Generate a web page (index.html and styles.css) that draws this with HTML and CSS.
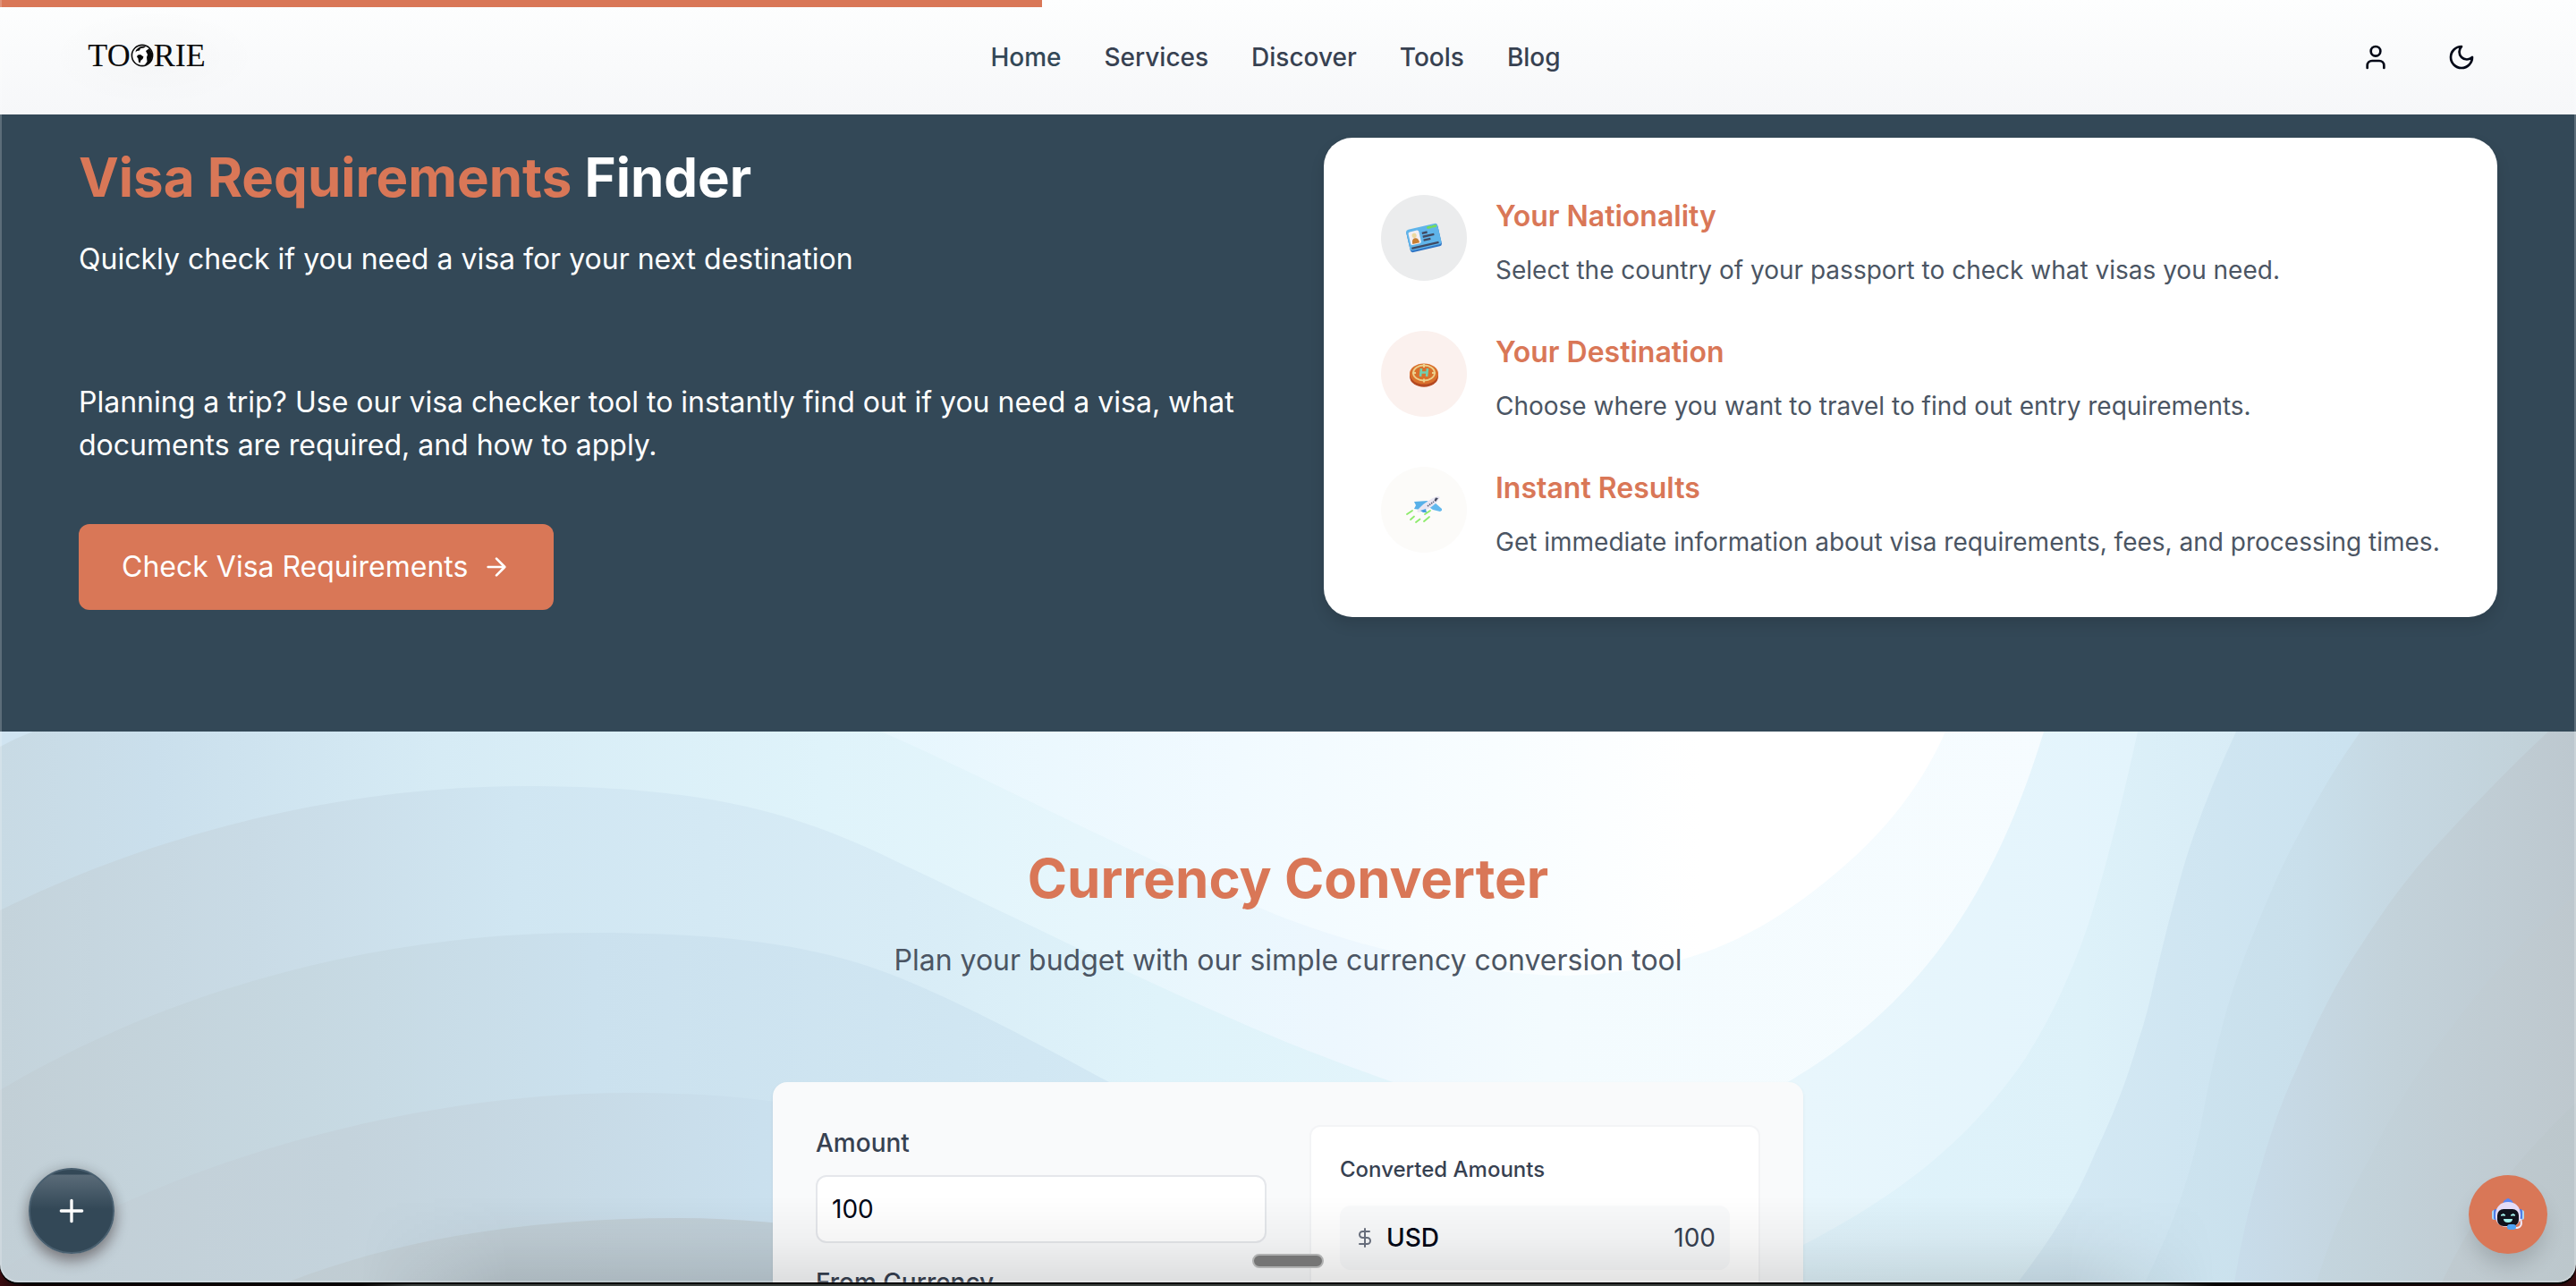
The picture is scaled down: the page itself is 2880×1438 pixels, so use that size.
FILE: index.html
```html
<!DOCTYPE html>
<html lang="en">
<head>
<meta charset="utf-8">
<meta name="viewport" content="width=device-width, initial-scale=1">
<title>Toorie</title>
<link rel="stylesheet" href="styles.css">
</head>
<body>
<div class="window">
  <header class="header">
    <div class="progress"></div>
    <a class="logo" href="#" aria-label="Toorie">
      <span>TO</span><svg class="logo-globe" viewBox="0 0 26 26" aria-hidden="true"><circle cx="13" cy="13" r="11.6" fill="#fff" stroke="#0a0a0a" stroke-width="1.6"/><path fill="#0a0a0a" d="M6 7c3-4 7-5 11-4l-2 1.500-4 .8-1 2.200-3 .5-1.500 1.500zM8 12.500l3-.5 3.500 2.500-1 2.500-2 1.500-1 3-1.500-1-.5-4-1.500-2zM17 8l4-3 3.500 6-1 7-4 4.500-4 1.500 3-4-.5-5 1-3z"/></svg><span>RIE</span>
    </a>
    <nav class="nav">
      <a class="active" href="#">Home</a>
      <a href="#">Services</a>
      <a href="#">Discover</a>
      <a href="#">Tools</a>
      <a href="#">Blog</a>
    </nav>
    <div class="actions">
      <button class="icon-button" type="button" aria-label="Account"><svg class="icon" viewBox="0 0 24 24"><path d="M19 21v-2a4 4 0 0 0-4-4H9a4 4 0 0 0-4 4v2"/><circle cx="12" cy="7" r="4"/></svg></button>
      <button class="icon-button" type="button" aria-label="Dark mode"><svg class="icon" viewBox="0 0 24 24"><path d="M12 3a6 6 0 0 0 9 9 9 9 0 1 1-9-9Z"/></svg></button>
    </div>
  </header>

  <main>
    <section class="visa">
      <div class="visa-intro">
        <h1 class="heading"><span class="accent">Visa Requirements</span> Finder</h1>
        <p class="lead">Quickly check if you need a visa for your next destination</p>
        <p class="body-copy">Planning a trip? Use our visa checker tool to instantly find out if you need a visa, what documents are required, and how to apply.</p>
        <button class="cta" type="button">Check Visa Requirements
          <svg class="icon" viewBox="0 0 24 24"><path d="M5 12h14M12 5l7 7-7 7"/></svg>
        </button>
      </div>
      <div class="steps">
        <article class="step">
          <div class="step-icon slate">
            <svg viewBox="0 0 40 40"><g transform="rotate(-13 20 20)"><rect x="2" y="8" width="36" height="25" rx="3" fill="#2f74c4"/><rect x="2" y="7" width="36" height="24" rx="3" fill="#5fb4ea"/><rect x="4" y="10" width="12" height="15" rx="2" fill="#f3eef2"/><circle cx="10" cy="15" r="2.600" fill="#ecd9a0"/><path d="M6 24q0-6 4-6t4 6z" fill="#c87f33"/><path d="M19 14.500h6M19 18.500h13M19 22.500h8M4 28.500h31" stroke="#414a63" stroke-width="2.400"/><path d="M27 9.800h3M32.500 9.800h3" stroke="#75dc58" stroke-width="2.800" stroke-linecap="round"/></g></svg>
          </div>
          <div>
            <h3>Your Nationality</h3>
            <p>Select the country of your passport to check what visas you need.</p>
          </div>
        </article>
        <article class="step">
          <div class="step-icon coral">
            <svg viewBox="0 0 40 40"><ellipse cx="20" cy="23" rx="16" ry="11.800" fill="#b54a22"/><ellipse cx="20" cy="20" rx="16" ry="11.500" fill="#d9702c"/><ellipse cx="20" cy="19" rx="12" ry="8.500" fill="none" stroke="#ecd08a" stroke-width="1.800"/><path d="M20 9v4M20 25.500v4M7 19h4M29 19h4" stroke="#ecd08a" stroke-width="2"/><path d="M17 14l-1 9M24 14l-1 9M17 18.500h6" stroke="#6fd0b0" stroke-width="2.600"/></svg>
          </div>
          <div>
            <h3>Your Destination</h3>
            <p>Choose where you want to travel to find out entry requirements.</p>
          </div>
        </article>
        <article class="step">
          <div class="step-icon sand">
            <svg viewBox="0 0 40 40"><path d="M9 11l15-1 2 4-10 6-7-1 2-4z" fill="#58b0e8"/><path d="M24 16l7-5 10 9-3 2-8-2z" fill="#62b8ee"/><path d="M12 22C16 15 28 7 35 5q4 0 2 3C33 15 23 21 14 23z" fill="#e9e6f3"/><path d="M33 6.500l3 .5-3 4-1.500-1.500z" fill="#454a5e"/><path d="M24 16l7-5" stroke="#5b5f78" stroke-width="1.800" stroke-dasharray="1.500 1"/><path d="M16 21l6-2 1 4-4 0z" fill="#4a9fe0"/><path d="M1 25l6-4M5 31l4-3.500M11 34l4.500-3.500M20 33l6-5M21 25l6-4" stroke="#8deb6b" stroke-width="1.800" stroke-linecap="round"/></svg>
          </div>
          <div>
            <h3>Instant Results</h3>
            <p>Get immediate information about visa requirements, fees, and processing times.</p>
          </div>
        </article>
      </div>
    </section>

    <section class="currency">
      <svg class="waves" viewBox="0 0 2880 616" preserveAspectRatio="none" aria-hidden="true">
        <defs>
          <linearGradient id="w8" gradientUnits="userSpaceOnUse" x1="0" y1="0" x2="2880" y2="0"><stop offset=".94" stop-color="#c0cbd1"/><stop offset="1" stop-color="#bcc7cc"/></linearGradient>
          <linearGradient id="w7" gradientUnits="userSpaceOnUse" x1="0" y1="0" x2="2880" y2="0"><stop offset=".9" stop-color="#c4d5de"/><stop offset=".95" stop-color="#c1ced5"/><stop offset="1" stop-color="#bec8ce"/></linearGradient>
          <linearGradient id="w6" gradientUnits="userSpaceOnUse" x1="0" y1="0" x2="2880" y2="0"><stop offset=".87" stop-color="#c8dcea"/><stop offset=".93" stop-color="#c3d2da"/><stop offset="1" stop-color="#bdc8cf"/></linearGradient>
          <linearGradient id="w5" gradientUnits="userSpaceOnUse" x1="0" y1="0" x2="2880" y2="0"><stop offset=".1" stop-color="#c0ccd2"/><stop offset=".3" stop-color="#c1d0d9"/><stop offset=".83" stop-color="#cde4f0"/><stop offset=".895" stop-color="#c9dfeb"/><stop offset=".93" stop-color="#c6d8e2"/><stop offset="1" stop-color="#c0cfd6"/></linearGradient>
          <linearGradient id="w4" gradientUnits="userSpaceOnUse" x1="0" y1="0" x2="2880" y2="100"><stop offset="0" stop-color="#c2ced5"/><stop offset=".14" stop-color="#c4d3dc"/><stop offset=".3" stop-color="#cae0ee"/><stop offset=".8" stop-color="#d4e9f4"/><stop offset=".91" stop-color="#cbe2ef"/></linearGradient>
          <linearGradient id="w3" gradientUnits="userSpaceOnUse" x1="0" y1="0" x2="2880" y2="0"><stop offset="0" stop-color="#c2cfd6"/><stop offset=".12" stop-color="#c6d8e1"/><stop offset=".23" stop-color="#cbe1ee"/><stop offset=".4" stop-color="#d1e7f3"/><stop offset=".7" stop-color="#e0f3fb"/><stop offset=".81" stop-color="#ddf1f9"/><stop offset=".87" stop-color="#d8ecf6"/></linearGradient>
          <linearGradient id="w2" gradientUnits="userSpaceOnUse" x1="0" y1="0" x2="2880" y2="0"><stop offset="0" stop-color="#c4d3db"/><stop offset=".1" stop-color="#c9dbe6"/><stop offset=".2" stop-color="#d0e6f2"/><stop offset=".35" stop-color="#d8ecf6"/><stop offset=".45" stop-color="#dff3fa"/><stop offset=".7" stop-color="#e8f6fc"/><stop offset=".83" stop-color="#e3f4fc"/></linearGradient>
          <linearGradient id="w1" gradientUnits="userSpaceOnUse" x1="0" y1="0" x2="2880" y2="0"><stop offset="0" stop-color="#c8dae4"/><stop offset=".06" stop-color="#cadfec"/><stop offset=".17" stop-color="#d6ebf5"/><stop offset=".32" stop-color="#dff3fa"/><stop offset=".42" stop-color="#e6f6fc"/><stop offset=".52" stop-color="#edf7fe"/><stop offset=".6" stop-color="#f3fbfe"/><stop offset=".8" stop-color="#f6fcff"/></linearGradient>
          <linearGradient id="w0" gradientUnits="userSpaceOnUse" x1="0" y1="0" x2="2880" y2="0"><stop offset=".34" stop-color="#e6f6fd"/><stop offset=".48" stop-color="#f1faff"/><stop offset=".58" stop-color="#f8fdff"/><stop offset=".66" stop-color="#ffffff"/></linearGradient>
        </defs>
        <path fill="url(#w8)" d="M0 0H2880V616H0z"/>
        <path fill="url(#w7)" d="M0 0V616H2730C2752 570 2775 530 2806 494Q2835 458 2880 415V0z"/>
        <path fill="url(#w6)" d="M0 0V616H2590C2606 565 2622 525 2649 478C2675 425 2705 375 2743 328Q2800 250 2880 182V0z"/>
        <path fill="url(#w5)" d="M0 0V616H2498C2506 570 2513 535 2527 490C2538 450 2552 410 2570 372C2590 325 2610 283 2641 237C2668 195 2695 158 2728 123Q2785 60 2849 0z"/>
        <path fill="url(#w4)" d="M0 0V616H321C450 565 600 544 758 544Q850 544 950 560L1200 616H2398C2428 555 2445 510 2460 443C2468 400 2475 365 2484 332C2492 300 2502 270 2515 237C2532 195 2548 155 2570 115Q2600 55 2639 0z"/>
        <path fill="url(#w3)" d="M0 0V604C150 500 430 404 703 404C860 404 940 425 1010 450L1200 616H2256C2295 565 2320 525 2343 470C2362 430 2378 390 2390 348C2398 325 2404 300 2409 277C2418 240 2425 210 2433 182C2439 158 2445 138 2453 115Q2472 60 2500 0z"/>
        <path fill="url(#w2)" d="M0 0V401C170 300 400 225 657 225C820 225 920 240 1010 277C1100 315 1170 355 1240 392C1400 480 1600 640 1800 640C1900 640 1980 600 2016 574C2120 520 2200 460 2264 366Q2293 320 2311 277Q2332 230 2346 178Q2368 100 2390 0z"/>
        <path fill="url(#w1)" d="M0 0V200C160 120 370 61 588 61C800 61 900 95 1010 149C1160 220 1300 290 1440 348C1560 395 1680 440 1780 440C1900 440 1980 405 2010 385C2150 300 2230 180 2285 0z"/>
        <path fill="url(#w0)" d="M985 0C1100 50 1300 155 1440 210C1560 255 1680 273 1752 273C1850 270 1920 250 1990 205C2080 145 2140 80 2175 0z"/>
        <path fill="#d0e4f1" d="M0 0H37Q18 7 0 17z"/>
      </svg>
      <h2 class="heading accent">Currency Converter</h2>
      <p class="lead">Plan your budget with our simple currency conversion tool</p>
      <form class="converter">
        <div class="fields">
          <label for="amount">Amount</label>
          <input id="amount" type="text" inputmode="decimal" value="100">
          <label for="from">From Currency</label>
          <select id="from"><option>USD</option></select>
        </div>
        <div class="results">
          <h3>Converted Amounts</h3>
          <div class="rate">
            <svg class="icon" viewBox="0 0 24 24"><path d="M12 2v20M17 5H9.500a3.500 3.500 0 0 0 0 7h5a3.500 3.500 0 0 1 0 7H6"/></svg>
            <span class="code">USD</span>
            <span class="value">100</span>
          </div>
        </div>
      </form>
    </section>
  </main>

  <div class="shade"></div>
  <div class="handle"></div>
  <button class="fab fab-add" type="button" aria-label="Add"><svg class="icon" viewBox="0 0 24 24"><path d="M5 12h14M12 5v14"/></svg></button>
  <button class="fab fab-chat" type="button" aria-label="Chat">
    <svg viewBox="0 0 40 40"><path d="M14 8q1-4 4-5 2-2 4 0 3 1 4 5z" fill="#5b86f0"/><rect x="2" y="15" width="5" height="11" rx="2.500" fill="#a9d6f5"/><rect x="33" y="15" width="5" height="11" rx="2.500" fill="#a9d6f5"/><rect x="4" y="14" width="5" height="12" rx="2" fill="#4f7de8"/><rect x="31" y="14" width="5" height="12" rx="2" fill="#4f7de8"/><path d="M6 21C6 11 12 6 20 6s14 5 14 15-6 13-14 13S6 31 6 21z" fill="#e4dcf8"/><rect x="8" y="14" width="24" height="19" rx="7" fill="#10131d"/><path d="M12 21q3-3 5 0zM23 21q3-3 5 0z" fill="#a5f3ee" stroke="#a5f3ee"/><path d="M15 25h10q0 4-5 4t-5-4z" fill="#a5f3ee"/><path d="M34 25q3 9-4 10h-3" fill="none" stroke="#f1ecff" stroke-width="2"/><rect x="19" y="31" width="10" height="6" rx="3" fill="#4fa3f5"/></svg>
  </button>
</div>
</body>
</html>
```
FILE: styles.css
```css
*, *::before, *::after { box-sizing: border-box; }

body {
  margin: 0;
  height: 100vh;
  overflow: hidden;
  background: linear-gradient(90deg, #3a0c10 0, #100404 1%, #0a0606 14%, #3c403e 16%, #3c403e 84%, #0a0606 86%, #1c080a 99%, #3a0c10 100%);
  font-family: Inter, "Liberation Sans", sans-serif;
  font-size: 28px;
  line-height: 40px;
  color: #374151;
}

h1, h2, h3, p { margin: 0; }
button { font: inherit; border: 0; padding: 0; cursor: pointer; }
a { color: inherit; text-decoration: none; }

.icon {
  width: 32px;
  height: 32px;
  fill: none;
  stroke: currentColor;
  stroke-width: 2;
  stroke-linecap: round;
  stroke-linejoin: round;
}

.window {
  position: relative;
  height: calc(100vh - 4px);
  overflow: hidden;
  border-radius: 0 0 20px 20px;
  box-shadow: 0 2px 0 #000;
}
.window::after {
  content: "";
  position: absolute;
  inset: 0;
  border: 2px solid rgba(255, 255, 255, .2);
  border-top: 0;
  border-radius: inherit;
  pointer-events: none;
}

.header {
  position: relative;
  display: flex;
  align-items: center;
  justify-content: space-between;
  height: 128px;
  padding: 0 88px;
  background:
    radial-gradient(120px 56px at 172px 64px, rgba(0, 0, 0, .015), transparent),
    linear-gradient(#fdfefe, #f6f7f9);
}
.progress {
  position: absolute;
  top: 0;
  left: 0;
  width: 40.45%;
  height: 8px;
  background: #d97757;
}
.logo {
  display: flex;
  align-items: center;
  justify-content: center;
  width: 148px;
  padding: 0 0 4px 4px;
  font-family: "Liberation Serif", serif;
  font-size: 36px;
  color: #0a0a0a;
}
.logo-globe { width: 26px; height: 26px; }
.nav { display: flex; gap: 48px; font-weight: 500; }
.nav .active { color: #334857; }
.actions { display: flex; gap: 16px; color: #020817; }
.icon-button {
  display: grid;
  place-items: center;
  width: 80px;
  height: 80px;
  background: none;
  color: inherit;
}

.heading { font-size: 60px; line-height: 72px; font-weight: 700; }
.accent { color: #d97757; }
.lead { margin-top: 32px; font-size: 32px; line-height: 48px; }

.visa {
  display: grid;
  grid-template-columns: 1fr 1fr;
  align-items: center;
  gap: 80px;
  padding: 26px 88px 128px;
  background: #334857;
  color: #fff;
}
.body-copy { margin-top: 112px; font-size: 32px; line-height: 48px; }
.cta {
  display: inline-flex;
  align-items: center;
  gap: 16px;
  height: 96px;
  margin-top: 64px;
  padding: 0 48px;
  border-radius: 12px;
  background: #d97757;
  color: #fff;
  font-size: 32px;
}
.steps {
  display: grid;
  gap: 48px;
  padding: 64px;
  border-radius: 32px;
  background: #fff;
  box-shadow: 0 8px 16px rgba(0, 0, 0, .12);
  color: #4b5563;
}
.step { display: flex; gap: 32px; }
.step h3 { margin-bottom: 16px; font-size: 32px; line-height: 48px; font-weight: 600; color: #d97757; }
.step-icon {
  display: grid;
  flex: none;
  place-items: center;
  width: 96px;
  height: 96px;
  border-radius: 50%;
}
.step-icon svg { width: 40px; height: 40px; }
.slate { background: #ebeced; }
.coral { background: #fbf1ee; }
.sand { background: #fcfbf9; }

.currency {
  position: relative;
  display: flow-root;
  padding: 128px 88px;
  text-align: center;
}
.waves { position: absolute; inset: 0; z-index: -1; width: 100%; height: 616px; }
.currency .lead { color: #4b5563; }
.converter {
  display: grid;
  grid-template-columns: 1fr 1fr;
  gap: 48px;
  max-width: 1152px;
  margin: 112px auto 0;
  padding: 48px;
  border-radius: 16px;
  background: #f9fafb;
  box-shadow: 0 2px 4px rgba(0, 0, 0, .06);
  text-align: left;
}
.fields { display: flex; flex-direction: column; font-weight: 500; }
.fields input, .fields select {
  width: 100%;
  height: 76px;
  margin: 16px 0 24px;
  padding: 0 16px;
  border: 2px solid #e5e7eb;
  border-radius: 12px;
  background: #fff;
  font: inherit;
  font-weight: 400;
  color: #020817;
}
.results {
  padding: 32px;
  border: 2px solid #f3f4f6;
  border-radius: 12px;
  background: #fff;
}
.results h3 { font-size: 24px; line-height: 32px; font-weight: 500; }
.rate {
  display: flex;
  align-items: center;
  gap: 12px;
  height: 72px;
  margin-top: 24px;
  padding: 0 16px;
  border-radius: 12px;
  background: #f9fafb;
}
.rate .icon { width: 24px; height: 24px; color: #6b7280; }
.code { font-weight: 500; color: #020817; }
.value { margin-left: auto; }

.shade {
  position: absolute;
  right: 14%;
  bottom: 0;
  left: 14%;
  height: 96px;
  background: linear-gradient(transparent, rgba(0, 0, 0, .04) 50%, rgba(0, 0, 0, .11));
  -webkit-mask-image: linear-gradient(90deg, transparent, #000 8%, #000 92%, transparent);
  mask-image: linear-gradient(90deg, transparent, #000 8%, #000 92%, transparent);
  pointer-events: none;
}
.handle {
  position: absolute;
  bottom: 16px;
  left: 50%;
  width: 80px;
  height: 16px;
  margin-left: -40px;
  border: 2px solid #b0b1b1;
  border-radius: 8px;
  background: #757575;
}
.fab {
  position: absolute;
  bottom: 32px;
  display: grid;
  place-items: center;
  border-radius: 50%;
  color: #fff;
}
.fab-add {
  left: 32px;
  width: 96px;
  height: 96px;
  border: 2px solid #4a6070;
  background: linear-gradient(#334857 5px, #5a6b78 6px, #334857 44px);
  box-shadow: 0 8px 16px rgba(30, 10, 10, .4), 0 0 16px rgba(0, 0, 0, .12);
}
.fab-add .icon { width: 40px; height: 40px; }
.fab-chat {
  right: 32px;
  width: 88px;
  height: 88px;
  background: #d97757;
  box-shadow: 0 16px 24px -4px rgba(0, 0, 0, .16);
}
.fab-chat svg { width: 40px; height: 40px; }
```
